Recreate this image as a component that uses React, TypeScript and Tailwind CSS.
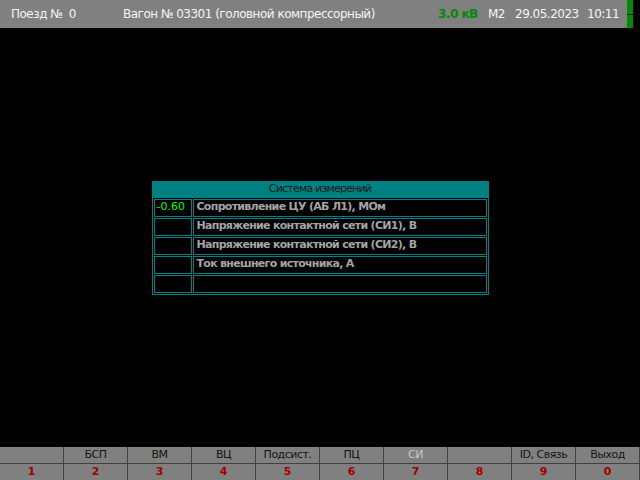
const keys = [
  { label: '', num: '1' },
  { label: 'БСП', num: '2' },
  { label: 'ВМ', num: '3' },
  { label: 'ВЦ', num: '4' },
  { label: 'Подсист.', num: '5' },
  { label: 'ПЦ', num: '6' },
  { label: 'СИ', num: '7', active: true },
  { label: '', num: '8' },
  { label: 'ID, Связь', num: '9' },
  { label: 'Выход', num: '0' },
];

const rows = [
  { value: '-0.60', name: 'Сопротивление ЦУ (АБ Л1), МОм' },
  { value: '', name: 'Напряжение контактной сети (СИ1), В' },
  { value: '', name: 'Напряжение контактной сети (СИ2), В' },
  { value: '', name: 'Ток внешнего источника, А' },
  { value: '', name: '' },
];

export default function App() {
  return (
    <div className="w-[640px] h-[480px] bg-black flex flex-col overflow-hidden" style={{ fontFamily: '"DejaVu Sans", Tahoma, sans-serif' }}>
      {/* Top status bar */}
      <div className="flex h-[28px] shrink-0">
        <div className="flex-1 bg-[#808080] flex items-center pl-[11px] text-[12px] tracking-[-0.5px] text-[#f4f4f4] whitespace-nowrap">
          <span className="w-[112px]">Поезд №&nbsp;&nbsp;0</span>
          <span className="w-[315px]">Вагон № 03301 (головной компрессорный)</span>
          <span className="w-[50px] font-bold text-[#008a00]">3.0 кВ</span>
          <span className="w-[27px]">M2</span>
          <span className="w-[72px]">29.05.2023</span>
          <span>10:11</span>
        </div>
        <div className="w-[6px] flex flex-col gap-[1px] bg-[#202020]">
          <div className="flex-1 bg-[#008c00]" />
          <div className="flex-1 bg-[#008c00]" />
        </div>
        <div className="w-[7px] bg-black" />
      </div>

      {/* Main area */}
      <div className="flex-1 flex items-center justify-center">
        <div className="w-[337px] border border-[#008080] bg-black">
          <div className="h-[16px] bg-[#008080] flex items-center justify-center text-[11px] tracking-[-0.8px] text-[#0a1a1a]">Система измерений</div>
          <div className="p-[1px] flex flex-col gap-[1px]">
            {rows.map((r, i) => (
              <div key={i} className="flex gap-[1px] h-[18px]">
                <div className="w-[38px] border border-[#008080] flex items-center pl-[2px] text-[11px] text-[#00ff00]">{r.value}</div>
                <div className="w-[294px] border border-[#008080] flex items-center pl-[3px] text-[11px] font-bold tracking-[-0.7px] text-[#a4a4a4] whitespace-nowrap">{r.name}</div>
              </div>
            ))}
          </div>
        </div>
      </div>

      {/* Function keys */}
      <div className="grid grid-cols-10 h-[33px] shrink-0 bg-[#808080]">
        {keys.map((k) => (
          <div key={k.num} className="flex flex-col border-r border-[#404040]">
            <div className={`h-[16px] flex items-center justify-center text-[11px] tracking-[-0.5px] whitespace-nowrap ${k.active ? 'text-[#c8c8c8]' : 'text-[#141414]'}`}>{k.label}</div>
            <div className="h-[1px] bg-[#404040]" />
            <div className="h-[16px] flex items-center justify-center text-[11px] font-bold text-[#a00000]">{k.num}</div>
          </div>
        ))}
      </div>
    </div>
  );
}
